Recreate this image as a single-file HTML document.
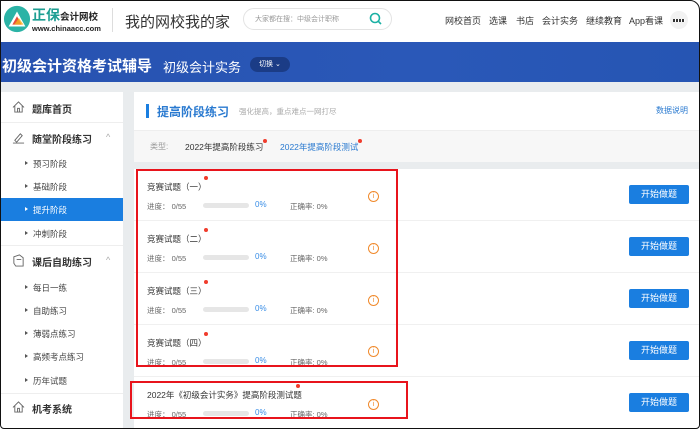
<!DOCTYPE html>
<html><head><meta charset="utf-8"><style>
*{margin:0;padding:0;box-sizing:border-box}
body{width:700px;height:429px;overflow:hidden;background:#e9ecee;font-family:"Liberation Sans","Noto Sans CJK SC",sans-serif;position:relative;color:#333}
.a{position:absolute;white-space:nowrap}
.hdr{left:0;top:0;width:700px;height:42px;background:#fff}
.ban{left:0;top:42px;width:700px;height:40px;background:linear-gradient(90deg,#2752b0,#2a58b8 60%,#2655b3)}
.side{left:0;top:92px;width:123px;height:337px;background:#fff}
.main{left:134px;top:92px;width:566px;height:337px;background:#fff}
.nav{font-size:9px;color:#333;top:14px}
.sh{font-size:10px;font-weight:bold;color:#333;left:32px}
.si{font-size:8.5px;color:#444;left:33px}
.tri{position:absolute;left:-8px;top:3px;width:0;height:0;border-left:3px solid #555;border-top:2.5px solid transparent;border-bottom:2.5px solid transparent}
.t{font-size:8.5px;color:#333;left:147px}
.p{font-size:7.5px;color:#666}
.bar{position:absolute;left:203px;width:46px;height:5px;border-radius:3px;background:#e6e6e6}
.pc{font-size:8px;color:#3a8ee6;left:255px}
.ok{font-size:7.5px;color:#666;left:290px}
.btn{left:629px;width:60px;height:19px;background:#1a7ee0;color:#fff;font-size:9px;text-align:center;line-height:19px;border-radius:2px}
.inf{left:368px;width:11px;height:11px;border:1px solid #f08a2c;border-radius:50%;color:#f08a2c;font-size:7px;text-align:center;line-height:9px}
.dot{width:4px;height:4px;border-radius:50%;background:#f03c2c}
.sep{left:134px;width:566px;height:1px;background:#f0f0f0}
</style></head><body>
<div class="a hdr"></div>
<svg class="a" style="left:3px;top:5px" width="28" height="28" viewBox="0 0 30 30"><circle cx="15" cy="15" r="14" fill="#2bb3a6"/><path d="M6 23 L15 7 L24 23 Z" fill="#fff"/><path d="M10 21 L15 12 L20 21Z" fill="#e84c3d"/><path d="M12 21 L17 14 L22 21Z" fill="#f5b31b" opacity=".8"/></svg>
<div class="a" style="left:32px;top:5px;font-size:14px;font-weight:bold;color:#1d9e92">正保</div>
<div class="a" style="left:60px;top:9px;font-size:9.5px;font-weight:bold;color:#222">会计网校</div>
<div class="a" style="left:32px;top:24px;font-size:7.5px;font-weight:bold;color:#222">www.chinaacc.com</div>
<div class="a" style="left:112px;top:8px;width:1px;height:24px;background:#ddd"></div>
<div class="a" style="left:125px;top:11px;font-size:15px;color:#333">我的网校我的家</div>
<div class="a" style="left:243px;top:8px;width:149px;height:22px;border:1px solid #e3e3e3;border-radius:11px"></div>
<div class="a" style="left:255px;top:14px;font-size:7px;color:#999">大家都在搜：中级会计职称</div>
<svg class="a" style="left:369px;top:12px" width="13" height="13" viewBox="0 0 13 13"><circle cx="6" cy="6" r="4.5" fill="none" stroke="#1bb0a4" stroke-width="1.6"/><path d="M9.3 9.3 L12 12" stroke="#1bb0a4" stroke-width="1.6"/></svg>
<div class="a nav" style="left:445px">网校首页</div>
<div class="a nav" style="left:489px">选课</div>
<div class="a nav" style="left:516px">书店</div>
<div class="a nav" style="left:542px">会计实务</div>
<div class="a nav" style="left:586px">继续教育</div>
<div class="a nav" style="left:629px">App看课</div>
<div class="a" style="left:670px;top:11px;width:18px;height:18px;border-radius:50%;background:#f2f2f2"></div>
<div class="a" style="left:673px;top:19px;width:12px;height:3px;background:repeating-linear-gradient(90deg,#333 0 2px,#fff 2px 3px)"></div>
<div class="a ban"></div>
<div class="a" style="left:2px;top:55px;font-size:15px;font-weight:bold;color:#fff">初级会计资格考试辅导</div>
<div class="a" style="left:163px;top:57px;font-size:13px;color:#fff">初级会计实务</div>
<div class="a" style="left:250px;top:57px;width:40px;height:15px;border-radius:8px;background:#1b3c86;color:#fff;font-size:7px;line-height:15px;padding-left:9px">切换 ⌄</div>

<div class="a side"></div>
<div class="a" style="left:0;top:122px;width:123px;height:1px;background:#eee"></div>
<div class="a" style="left:0;top:245px;width:123px;height:1px;background:#eee"></div>
<div class="a" style="left:0;top:393px;width:123px;height:1px;background:#eee"></div>
<svg class="a" style="left:12px;top:101px" width="13" height="12" viewBox="0 0 14 13"><path d="M1 7 L7 1 L13 7 M3 5 V12 H11 V5 M6 12 V8 H8 V12" fill="none" stroke="#666" stroke-width="1"/></svg>
<div class="a sh" style="top:101px">题库首页</div>
<svg class="a" style="left:12px;top:131px" width="13" height="13" viewBox="0 0 14 14"><path d="M3 10 L9 3 L11 5 L5 12 Z M1 13 H13" fill="none" stroke="#666" stroke-width="1"/></svg>
<div class="a sh" style="top:131px">随堂阶段练习</div>
<div class="a" style="left:106px;top:132px;font-size:9px;color:#aaa">^</div>
<div class="a si" style="top:158px"><span class="tri"></span>预习阶段</div>
<div class="a si" style="top:181px"><span class="tri"></span>基础阶段</div>
<div class="a" style="left:0;top:198px;width:123px;height:23px;background:#1a7ee0"></div>
<div class="a si" style="top:204px;color:#fff"><span class="tri" style="border-left-color:#fff"></span>提升阶段</div>
<div class="a si" style="top:228px"><span class="tri"></span>冲刺阶段</div>
<svg class="a" style="left:12px;top:254px" width="13" height="13" viewBox="0 0 14 14"><path d="M2 3 L8 1 L12 4 V13 H4 L2 10 Z M5 6 H10" fill="none" stroke="#666" stroke-width="1"/></svg>
<div class="a sh" style="top:254px">课后自助练习</div>
<div class="a" style="left:106px;top:255px;font-size:9px;color:#aaa">^</div>
<div class="a si" style="top:282px"><span class="tri"></span>每日一练</div>
<div class="a si" style="top:305px"><span class="tri"></span>自助练习</div>
<div class="a si" style="top:328px"><span class="tri"></span>薄弱点练习</div>
<div class="a si" style="top:351px"><span class="tri"></span>高频考点练习</div>
<div class="a si" style="top:375px"><span class="tri"></span>历年试题</div>
<svg class="a" style="left:12px;top:401px" width="13" height="12" viewBox="0 0 14 13"><path d="M1 7 L7 1 L13 7 M3 5 V12 H11 V5 M6 12 V8 H8 V12" fill="none" stroke="#666" stroke-width="1"/></svg>
<div class="a sh" style="top:401px">机考系统</div>

<div class="a main"></div>
<div class="a" style="left:146px;top:104px;width:3px;height:14px;background:#1a7ee0"></div>
<div class="a" style="left:157px;top:103px;font-size:12px;font-weight:bold;color:#2a7ad0">提高阶段练习</div>
<div class="a" style="left:239px;top:106px;font-size:7.5px;color:#aaa">强化提高，重点难点一网打尽</div>
<div class="a" style="left:656px;top:105px;font-size:8px;color:#2a7ad0">数据说明</div>
<div class="a" style="left:134px;top:130px;width:566px;height:32px;background:#f7f7f7;border-top:1px solid #eee"></div>
<div class="a" style="left:150px;top:141px;font-size:8px;color:#999">类型:</div>
<div class="a" style="left:185px;top:141px;font-size:8.5px;color:#333">2022年提高阶段练习</div>
<div class="a dot" style="left:263px;top:139px"></div>
<div class="a" style="left:280px;top:141px;font-size:8.5px;color:#2a7ad0">2022年提高阶段测试</div>
<div class="a dot" style="left:358px;top:139px"></div>
<div class="a" style="left:134px;top:162px;width:566px;height:7px;background:#e9ecee"></div>

<div class="a sep" style="top:220px"></div>
<div class="a sep" style="top:272px"></div>
<div class="a sep" style="top:324px"></div>
<div class="a sep" style="top:376px"></div>

<div class="a t" style="top:181px">竞赛试题（一）</div><div class="a dot" style="left:204px;top:176px"></div>
<div class="a p" style="left:147px;top:201px">进度： 0/55</div><div class="bar" style="top:203px"></div><div class="a pc" style="top:200px">0%</div><div class="a ok" style="top:201px">正确率: 0%</div>
<div class="a inf" style="top:191px">i</div><div class="a btn" style="top:185px">开始做题</div>

<div class="a t" style="top:233px">竞赛试题（二）</div><div class="a dot" style="left:204px;top:228px"></div>
<div class="a p" style="left:147px;top:253px">进度： 0/55</div><div class="bar" style="top:255px"></div><div class="a pc" style="top:252px">0%</div><div class="a ok" style="top:253px">正确率: 0%</div>
<div class="a inf" style="top:243px">i</div><div class="a btn" style="top:237px">开始做题</div>

<div class="a t" style="top:285px">竞赛试题（三）</div><div class="a dot" style="left:204px;top:280px"></div>
<div class="a p" style="left:147px;top:305px">进度： 0/55</div><div class="bar" style="top:307px"></div><div class="a pc" style="top:304px">0%</div><div class="a ok" style="top:305px">正确率: 0%</div>
<div class="a inf" style="top:295px">i</div><div class="a btn" style="top:289px">开始做题</div>

<div class="a t" style="top:337px">竞赛试题（四）</div><div class="a dot" style="left:204px;top:332px"></div>
<div class="a p" style="left:147px;top:357px">进度： 0/55</div><div class="bar" style="top:359px"></div><div class="a pc" style="top:356px">0%</div><div class="a ok" style="top:357px">正确率: 0%</div>
<div class="a inf" style="top:346px">i</div><div class="a btn" style="top:341px">开始做题</div>

<div class="a t" style="top:389px">2022年《初级会计实务》提高阶段测试题</div><div class="a dot" style="left:296px;top:384px"></div>
<div class="a p" style="left:147px;top:409px">进度： 0/55</div><div class="bar" style="top:411px"></div><div class="a pc" style="top:408px">0%</div><div class="a ok" style="top:409px">正确率: 0%</div>
<div class="a inf" style="top:399px">i</div><div class="a btn" style="top:393px">开始做题</div>

<div class="a" style="left:136px;top:169px;width:262px;height:198px;border:2px solid #e8141c"></div>
<div class="a" style="left:130px;top:381px;width:278px;height:38px;border:2px solid #e8141c"></div>
<div class="a" style="left:0;top:0;width:700px;height:429px;border:1.5px solid #111;border-radius:0 10px 4px 4px"></div>
</body></html>
